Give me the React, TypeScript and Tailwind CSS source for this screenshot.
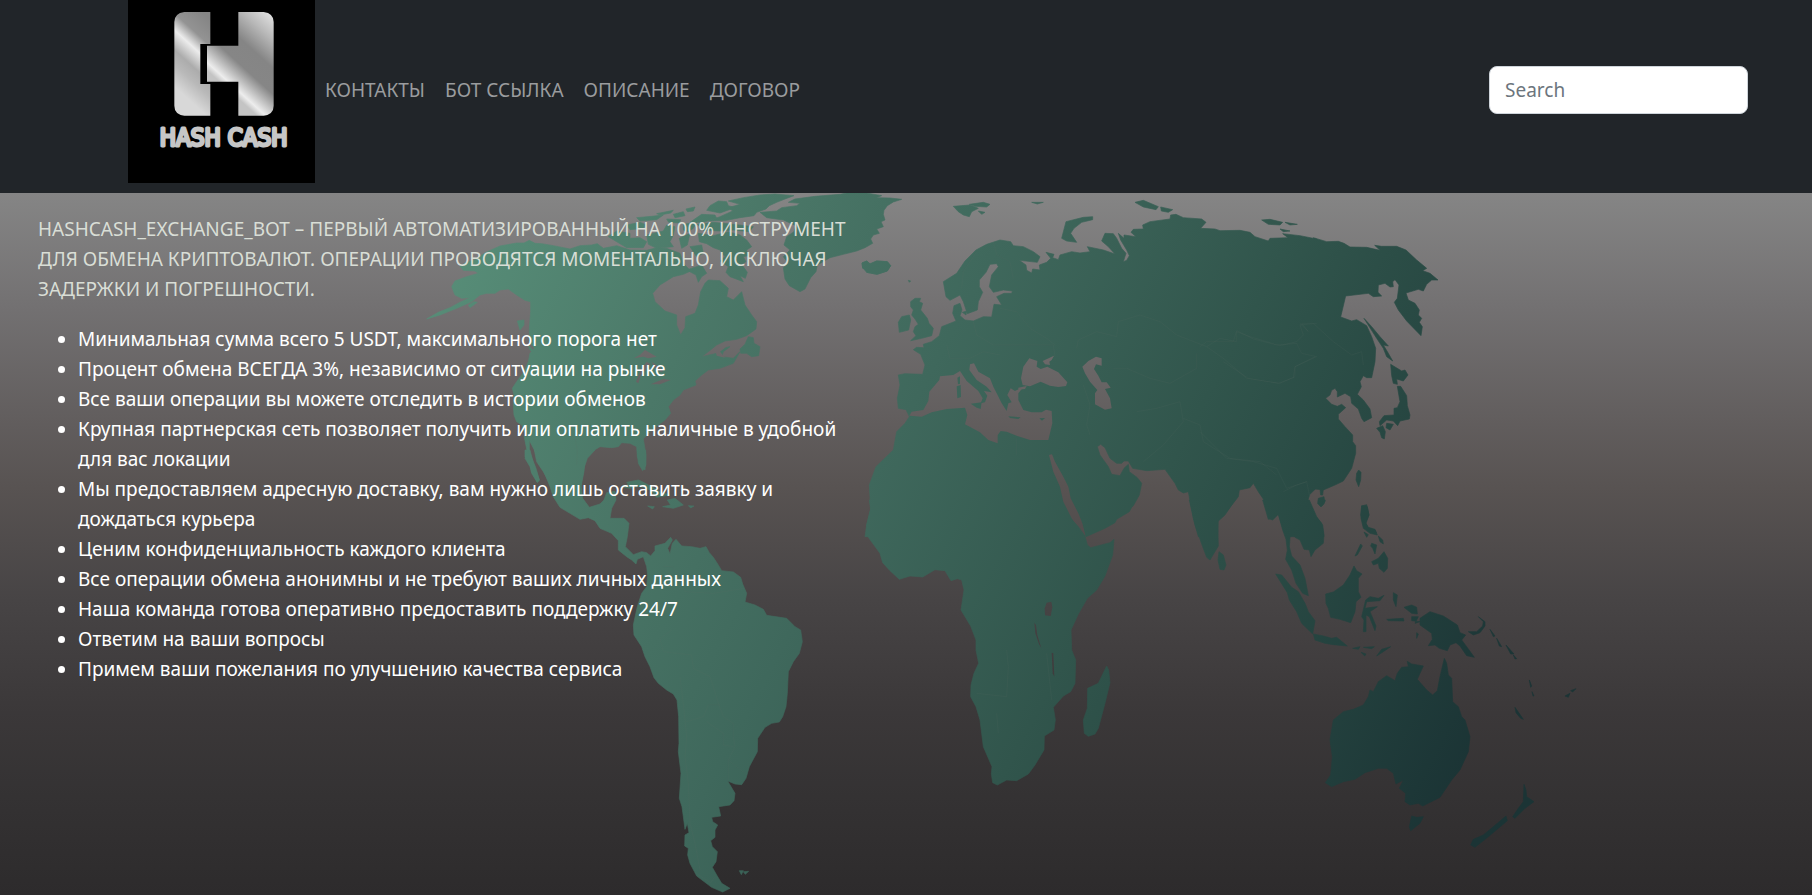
const navLinks = ["КОНТАКТЫ", "БОТ ССЫЛКА", "ОПИСАНИЕ", "ДОГОВОР"];

const features = [
  "Минимальная сумма всего 5 USDT, максимального порога нет",
  "Процент обмена ВСЕГДА 3%, независимо от ситуации на рынке",
  "Все ваши операции вы можете отследить в истории обменов",
  "Крупная партнерская сеть позволяет получить или оплатить наличные в удобной для вас локации",
  "Мы предоставляем адресную доставку, вам нужно лишь оставить заявку и дождаться курьера",
  "Ценим конфиденциальность каждого клиента",
  "Все операции обмена анонимны и не требуют ваших личных данных",
  "Наша команда готова оперативно предоставить поддержку 24/7",
  "Ответим на ваши вопросы",
  "Примем ваши пожелания по улучшению качества сервиса",
];

type Region = { at: [number, number]; land: string[]; water?: string[]; borders?: string[] };

const regions: Region[] = [
  {
    // North America, Greenland, Iceland
    at: [400, 185],
    land: [
      "80,402 115,382 150,368 180,352 210,338 185,340 165,330 155,305 165,288 200,275 235,265 225,258 190,256 180,244 200,232 232,222 245,210 262,200 300,183 350,174 372,174 388,166 405,175 425,176 460,182 510,192 540,182 575,180 592,176 610,190 650,182 690,195 740,196 770,188 800,190 840,205 850,235 872,258 850,268 820,275 780,300 758,325 765,350 795,378 830,390 830,420 842,450 855,428 857,395 885,385 895,360 902,320 915,295 925,285 960,287 985,310 980,335 1000,345 1025,320 1035,360 1055,390 1070,410 1068,432 1040,452 1010,463 975,468 950,480 925,500 905,515 950,505 975,488 990,485 970,500 965,515 1000,520 1020,500 1000,535 960,550 925,555 905,570 885,588 888,600 850,615 840,630 820,645 805,665 812,685 795,705 775,720 750,740 730,762 738,810 735,855 722,845 712,815 710,785 690,775 665,773 655,785 635,788 600,785 575,800 555,825 552,860 543,905 455,905 430,860 410,830 403,795 390,770 375,745 365,720 350,710 342,690 340,660 342,630 337,610 350,590 372,560 385,530 390,505 403,490 388,470 388,430 392,380 392,350 375,346 350,330 325,312 300,315 285,325 260,325 240,330 215,350 170,370 120,390",
      "372,752 388,760 388,800 398,825 408,850 418,885 412,893 395,865 390,845 375,820 382,802",
      "1020,492 1035,478 1045,455 1060,458 1062,475 1080,485 1076,512 1055,515 1040,505 1022,505",
      "352,408 372,405 372,420 360,435",
      "385,480 412,510 405,512 388,492",
      "205,360 222,350 232,352 210,368",
      "985,48 1030,38 1080,30 1125,27 1182,32 1155,42 1130,52 1108,62 1098,72 1070,82 1062,92 1020,98 980,106 925,108 960,95 998,78 985,68 1020,58",
      "930,62 955,48 980,50 985,62 1005,68 960,84 920,76",
      "905,88 945,90 950,100 910,112 870,112",
      "858,72 885,66 880,78 862,80",
      "770,86 820,76 812,84 780,90",
      "820,88 850,80 855,92 825,98",
      "710,98 755,94 790,90 770,104 720,108",
      "800,102 842,104 838,114 806,112",
      "680,120 720,112 740,120 730,130 690,134",
      "625,155 650,138 690,145 690,160 720,158 740,170 730,188 680,188 650,170",
      "740,150 790,138 800,120 825,125 820,150 810,170 820,185 770,190 745,178",
      "850,118 890,112 880,130 865,140 850,135",
      "838,160 870,145 862,180 845,190",
      "870,185 905,180 910,205 890,215",
      "860,255 905,240 920,265 905,275 895,292 888,270",
      "892,118 940,112 1000,118 1060,125 1048,140 1000,135 960,138 910,136",
      "895,145 940,152 985,140 1020,150 1040,165 1055,185 1040,195 1045,212 1030,215 1038,230 1025,238 1042,262 1036,280 1020,272 1030,290 990,275 978,262 985,245 960,228 975,215 960,195 940,188 920,176 898,170",
      "1080,82 1130,78 1145,68 1190,62 1200,55 1165,52 1185,42 1245,34 1320,28 1350,22 1400,24 1445,32 1428,38 1470,39 1505,43 1480,51 1462,62 1452,76 1450,88 1455,105 1443,110 1450,125 1430,132 1438,145 1420,150 1412,162 1418,175 1395,188 1370,198 1330,208 1290,218 1252,240 1248,260 1232,278 1215,312 1200,320 1168,302 1155,282 1150,248 1165,235 1150,215 1170,195 1152,180 1160,155 1182,140 1188,122 1150,105 1100,98",
      "1386,234 1400,228 1410,238 1430,228 1462,230 1472,242 1462,258 1432,268 1400,262 1388,248",
      "680,892 715,885 740,898 735,906 690,902",
    ],
    water: [
      "702,520 722,508 735,495 770,515 745,520 730,515",
      "740,530 752,538 722,572 715,595 708,590 722,555",
      "755,530 790,555 785,562 765,550",
      "752,598 790,582 812,585 780,598",
      "945,490 985,470 985,480 960,500 975,518 950,512",
      "930,270 950,272 940,284",
    ],
    borders: ["525,760 532,795 530,840"],
  },
  {
    // Central and South America
    at: [500, 450],
    land: [
      "103,0 285,0 262,25 250,60 243,105 248,145 268,172 300,162 312,150 320,128 345,124 348,150 335,175 330,205 372,205 387,220 382,260 376,290 400,314 425,305 440,308 452,318 465,302 465,288 495,280 512,262 517,270 503,295 510,312 517,280 528,268 545,288 575,290 600,295 618,290 628,308 640,322 655,345 665,362 700,366 722,382 728,402 740,430 735,456 765,465 790,478 800,496 860,505 885,530 902,540 907,575 898,610 880,635 865,665 862,730 858,770 848,800 838,816 815,820 795,832 773,865 772,905 748,950 738,985 725,1004 705,1002 683,993 705,1030 702,1052 690,1065 656,1070 662,1098 635,1102 638,1115 653,1125 645,1140 645,1162 632,1172 637,1190 652,1205 648,1235 637,1252 650,1275 665,1300 690,1315 668,1326 635,1312 590,1278 570,1240 563,1215 565,1195 554,1188 555,1155 567,1148 562,1120 555,1138 550,1100 546,1070 538,1045 543,970 535,905 537,880 536,800 531,750 520,732 500,720 475,700 462,683 450,650 435,620 425,590 402,555 400,525 412,470 425,430 440,410 443,375 440,350 430,320 412,328 408,342 395,330 380,320 355,300 355,272 335,250 300,235 285,212 265,203 240,208 210,190 180,172 160,140 150,110 130,60 125,40",
      "75,0 90,0 100,40 118,90 112,96 95,65 92,45 75,20",
      "412,0 437,0 438,45 428,62 415,40",
      "372,112 390,98 420,92 455,110 480,125 510,135 470,142 450,120 420,108 390,115",
      "502,150 525,145 550,165 520,175 488,170 512,165",
      "443,168 463,170 458,177",
      "565,167 582,168 572,174",
      "718,1262 730,1262 724,1274",
      "730,1265 746,1264 736,1273",
    ],
    borders: [
      "490,350 520,350 555,425 640,430 735,415",
      "515,540 480,565 490,605 575,615 580,655 630,680 640,710 655,760 670,800 700,820 700,860 705,890 685,930 685,990",
      "540,680 552,780 560,860 555,920 565,1000 570,1120 585,1180 600,1260",
      "560,815 610,800 625,765 660,765",
      "620,815 670,850 670,885 700,890",
      "685,930 735,970",
      "585,1268 632,1298 645,1280",
    ],
  },
  {
    // Europe, North Africa, western and central Asia
    at: [850, 185],
    land: [
      "145,670 142,640 150,600 145,570 165,566 218,568 225,540 212,508 190,494 200,487 222,488 220,478 245,470 268,452 275,425 318,408 308,385 312,362 330,355 336,375 330,392 345,405 370,408 400,395 425,396 432,358 455,360 440,335 462,325 485,325 487,318 460,315 430,322 418,305 425,270 445,245 440,236 420,238 408,262 388,285 388,305 398,322 385,350 382,375 352,386 340,350 330,330 300,346 288,335 280,290 320,265 345,228 378,195 410,178 450,165 482,170 490,182 520,185 550,200 570,215 562,232 508,226 528,240 530,256 545,264 548,252 570,255 568,240 590,232 602,220 588,202 612,208 608,218 625,224 630,210 665,200 690,204 720,200 712,185 760,195 795,207 775,185 755,168 765,145 790,146 800,160 815,190 828,205 820,230 830,226 838,212 830,195 812,165 805,145 822,160 822,150 858,155 843,142 850,133 880,132 878,120 900,110 960,102 962,90 978,88 1000,98 1055,102 1068,112 1052,130 1095,132 1110,137 1170,136 1200,142 1215,155 1255,168 1260,160 1314,158 1298,146 1350,152 1400,162 1400,908 1380,928 1372,950 1390,985 1415,1015 1422,1055 1310,1055 1300,1035 1285,988 1268,1005 1255,1000 1252,960 1225,920 1210,895 1200,908 1168,915 1165,935 1130,980 1105,1000 1103,1055 1045,1055 1030,1000 1015,920 1000,924 985,915 975,895 945,853 890,857 848,850 835,828 822,828 815,835 800,835 780,820 765,788 752,778 742,785 750,810 775,845 785,868 810,872 822,850 835,838 838,860 862,878 875,895 868,930 850,962 800,1000 760,1025 705,1052 45,1055 50,1020 62,970 58,900 78,845 130,795 140,740 165,715 178,695 168,674",
      "182,350 195,340 212,340 208,350 218,355 212,375 232,400 237,415 250,430 245,452 215,460 182,467 198,452 190,440 195,425 205,418 195,402 185,390 190,375 182,365",
      "145,412 155,395 178,390 182,405 176,435 148,442",
      "337,382 350,378 348,390",
      "310,64 360,60 385,70 365,80 358,95 340,90 325,80",
      "358,58 400,52 420,58 410,66 375,64",
      "385,78 405,82 395,88",
      "545,52 580,52 562,57",
      "36,234 50,228 60,236 80,228 112,230 122,242 112,258 80,268 50,262 60,250 38,250",
      "635,160 648,110 700,97 728,95 728,104 695,112 672,130 662,145 680,172 650,168",
      "855,52 880,46 925,65 918,74 880,66",
      "932,66 968,74 955,82 934,78",
      "1235,105 1260,103 1298,112 1290,120 1255,118",
      "1305,112 1342,118 1320,120",
      "1290,132 1320,138 1300,140",
      "1405,940 1422,935 1424,950 1412,965 1403,955",
      "1410,912 1420,912 1418,930 1412,930",
      "175,286 182,288 178,292",
    ],
    water: [
      "178,692 185,680 220,675 235,648 238,620 268,585 270,574 310,570 330,558 350,588 385,618 398,640 392,655 405,652 412,632 402,618 425,622 410,605 380,585 358,555 360,538 372,535 385,560 420,580 430,605 440,625 455,655 470,678 475,655 485,652 472,630 482,610 495,618 520,606 505,625 505,645 520,675 545,682 575,682 588,674 605,678 607,715 595,765 560,765 540,765 500,752 470,740 452,738 443,750 443,775 415,765 390,742 345,718 352,690 345,668 290,672 245,682 215,695 190,693",
      "513,580 520,545 538,520 562,528 560,545 572,552 592,545 625,562 652,592 648,603 625,606 600,602 572,590 540,604 518,600",
      "578,528 612,512 605,525 598,530 600,540 585,538",
      "697,545 715,528 738,515 755,520 755,542 738,538 732,552 745,572 755,592 770,592 782,608 765,612 780,640 785,670 765,674 735,658 735,625 742,615 720,590 705,565",
      "597,810 606,808 615,830 640,875 655,905 662,940 685,985 697,1015 708,1052 698,1052 665,1000 640,950 630,905 610,860",
      "505,608 530,603 525,612 505,614",
    ],
    borders: [
      "370,410 380,450 430,480 520,480 610,480 615,515",
      "450,370 500,380 540,430 590,460 615,480",
      "430,170 440,210 480,230 490,280",
      "380,200 340,260 335,310",
      "680,490 685,465 740,440 800,455 805,410 870,390 930,410 980,450 1070,485 1110,460 1160,470 1160,440 1200,455 1250,470 1290,482 1340,470 1360,450 1350,420 1400,415",
      "1070,485 1120,520 1190,580 1290,595 1335,575 1335,545 1395,515",
      "790,550 830,550 900,580 960,595 1040,550 1040,505",
      "700,600 720,660 710,720 720,750",
      "860,680 920,670 990,650 1000,710 940,780 880,830",
      "1000,700 1050,720 1060,770 1140,820 1230,830 1280,870",
      "1300,920 1340,900 1370,890 1380,940",
      "290,480 300,520 360,520 400,500 450,510",
      "500,760 500,810",
    ],
  },
  {
    // Africa, southern Arabia, southern India
    at: [850, 500],
    land: [
      "58,0 635,0 645,30 662,55 685,80 705,108 712,135 722,143 780,128 792,118 788,165 765,228 740,270 712,295 685,342 663,390 665,450 677,480 675,550 662,575 640,588 610,622 616,660 612,690 583,708 582,750 555,795 535,822 500,842 470,840 442,855 428,848 424,822 426,800 400,740 390,660 378,620 362,590 363,555 372,520 386,490 378,450 378,420 362,378 333,330 342,270 335,240 322,236 303,242 285,212 255,209 218,231 180,228 148,238 120,212 98,188 90,160 55,112 50,75 62,30",
      "675,0 857,0 838,35 800,58 795,68 765,85 708,110 698,60",
      "1018,0 1155,0 1125,45 1103,65 1105,138 1080,180 1070,172 1058,140 1035,75",
      "1107,155 1120,165 1128,195 1122,210 1110,208 1104,180",
      "770,498 776,510 780,548 765,610 745,685 735,702 715,709 703,700 700,660 712,625 713,565 745,550",
    ],
    water: [
      "590,308 604,305 607,322 602,348 585,346 584,325",
      "553,368 558,375 562,405 574,445 567,432 556,400",
      "605,458 610,460 613,530 608,520",
    ],
    borders: ["470,450 475,500 470,590 380,580", "440,640 445,700", "590,460 605,600"],
  },
  {
    // East Asia, Kamchatka, Japan
    at: [1200, 185],
    land: [
      "340,158 380,170 415,169 432,175 450,186 500,187 540,196 524,181 545,184 590,184 618,195 650,225 680,250 668,257 690,265 714,285 695,285 680,298 670,318 655,313 618,324 625,345 645,355 658,375 655,390 665,400 658,412 667,425 663,452 620,408 595,375 583,352 592,340 597,300 585,284 578,290 580,305 570,306 555,295 535,300 534,322 545,333 520,335 505,325 437,333 422,396 455,408 470,404 500,422 515,455 527,490 525,530 515,578 500,578 490,572 480,590 484,605 472,628 490,645 510,672 515,698 492,710 485,700 475,672 455,655 452,635 435,625 412,636 412,620 405,610 395,616 390,630 377,640 395,658 412,664 425,658 437,668 415,688 415,702 435,725 458,750 458,770 467,782 467,805 455,850 430,888 405,900 370,915 345,912 340,916",
      "492,400 515,425 540,455 565,483 550,480 565,505 578,528 560,515 550,490 530,460",
      "572,538 605,558 615,555 624,570 610,588 590,582 592,598 580,595 575,572",
      "592,604 602,604 620,632 622,662 630,690 628,702 600,708 593,722 580,708 560,705 540,722 538,710 552,692 582,690 582,670 592,668 600,650",
      "530,730 548,722 556,740 553,762 545,758 540,742",
      "560,715 580,718 570,735 558,728",
      "476,855 483,862 482,885 476,905 468,885 470,865",
      "485,962 502,965 507,990 498,1015 505,1030 525,1035 532,1050 510,1045 490,1030 483,1000",
    ],
    borders: [
      "300,415 325,440 305,415 340,415 400,470 455,510 485,500 490,540",
      "0,485 20,470 100,470 110,437 160,462 230,480 290,475 305,505 350,515 285,545 280,578 235,595 145,580 70,530",
      "0,740 80,820 160,830 230,850 260,910 320,890",
    ],
  },
  {
    // Southeast Asia, Australia, New Zealand
    at: [1200, 500],
    land: [
      "188,0 328,0 350,50 368,75 372,105 370,130 345,150 333,170 328,150 312,148 300,120 285,112 280,98 272,98 270,115 268,140 275,168 300,195 315,235 325,287 308,280 288,250 275,210 257,178 262,150 258,118 248,90 235,42 220,55 205,58",
      "355,0 376,0 372,12 364,20 356,12",
      "227,222 245,225 275,262 295,275 315,310 325,335 345,362 338,402 305,370 290,335 268,300 262,278",
      "340,402 370,408 395,415 410,412 442,438 400,434 375,430 345,420",
      "377,282 400,276 430,255 450,225 462,198 470,212 486,222 475,235 475,275 483,292 468,305 465,335 452,368 420,358 392,352 385,325 378,310",
      "497,300 510,290 535,295 552,286 540,302 500,305 495,325 515,322 532,320 510,335 528,378 525,392 508,350 498,345 498,395 490,395 492,360 485,350",
      "485,18 500,14 507,45 497,68 505,82 525,88 530,100 510,95 492,82 482,45",
      "515,185 535,175 552,155 563,175 562,205 552,217 538,205 535,190 520,195",
      "535,108 548,120 550,132 540,125",
      "515,130 530,135 525,162 518,145 512,138",
      "465,168 482,132 487,138 472,165",
      "492,96 505,104 500,112",
      "580,278 592,285 588,320 580,300",
      "560,358 610,355 612,363 565,362",
      "612,322 635,315 650,322 652,342 635,340",
      "635,350 655,350 645,370 660,365 635,362",
      "660,355 690,335 730,348 772,375 780,398 797,405 785,420 800,440 823,472 800,467 780,438 768,428 750,435 742,452 718,445 705,435 685,437 697,418 695,400 660,375",
      "805,395 830,395 848,378 850,365 835,350 855,365 855,378 840,398 820,405",
      "870,388 885,408 880,410",
      "890,415 905,440 898,438",
      "918,435 942,462 932,462",
      "940,465 950,476 945,477",
      "458,445 480,440 475,448",
      "490,442 523,440 515,446",
      "483,457 498,462 494,468",
      "530,468 545,448 572,440 550,455",
      "650,398 655,402 650,415",
      "622,484 635,492 670,498 660,520 652,538 680,570 698,585 712,572 720,530 733,475 740,490 745,525 755,535 758,605 775,620 785,650 795,660 810,710 805,755 780,810 755,840 720,892 700,902 668,918 655,910 630,915 615,905 617,880 598,865 610,840 588,852 580,820 560,805 535,805 495,818 465,838 430,845 395,860 376,848 392,825 397,770 390,720 400,660 430,635 460,628 490,615 505,590 510,570 520,575 535,545 560,527 585,542 592,520 605,502 625,500",
      "635,948 650,952 670,950 660,970 632,992 628,980",
      "972,853 978,870 980,890 1002,905 975,925 945,955 938,950 955,925 970,905",
      "918,948 922,962 865,1010 825,1042 812,1035 820,1018 850,1005 880,980",
      "945,622 970,658 962,655 948,638",
      "988,540 995,558 992,562",
      "996,575 1002,588 999,588",
      "1095,588 1110,580 1105,592",
      "1112,572 1128,566 1118,576",
    ],
  },
];

function place([x, y]: [number, number]) {
  return `translate(${x} ${y}) scale(0.33333)`;
}

function WorldMap() {
  return (
    <svg
      className="absolute inset-0 h-full w-full"
      viewBox="0 193 1812 702"
      preserveAspectRatio="xMidYMin slice"
      aria-hidden="true"
    >
      <defs>
        <linearGradient id="land" gradientUnits="userSpaceOnUse" x1="430" y1="250" x2="1450" y2="800">
          <stop offset="0" stopColor="#588f79" />
          <stop offset="0.23" stopColor="#4b7868" />
          <stop offset="0.43" stopColor="#3f685c" />
          <stop offset="0.65" stopColor="#31554c" />
          <stop offset="0.77" stopColor="#294a44" />
          <stop offset="1" stopColor="#1b3435" />
        </linearGradient>
        <mask id="continents" maskUnits="userSpaceOnUse" x="0" y="193" width="1812" height="702">
          {regions.map((r, i) => (
            <g key={i} transform={place(r.at)}>
              {r.land.map((p) => (
                <polygon key={p} points={p} fill="#fff" stroke="#fff" strokeWidth="2" strokeLinejoin="round" />
              ))}
              {r.water?.map((p) => (
                <polygon key={p} points={p} fill="#000" />
              ))}
            </g>
          ))}
          <g transform={place([850, 185])} fill="#fff">
            <polygon points="362,656 395,652 392,672 380,668" />
            <polygon points="320,604 332,600 333,636 322,640" />
            <polygon points="322,578 330,574 330,596 324,598" />
            <polygon points="475,694 512,697 505,702 480,699" />
            <polygon points="568,700 585,699 576,707" />
          </g>
        </mask>
      </defs>
      <rect x="0" y="193" width="1812" height="702" fill="url(#land)" mask="url(#continents)" />
      {regions.map((r, i) => (
        <g key={i} transform={place(r.at)} fill="none" stroke="#5b6f66" strokeOpacity="0.2" strokeWidth="2">
          {r.borders?.map((p) => (
            <polyline key={p} points={p} />
          ))}
        </g>
      ))}
    </svg>
  );
}

function Logo() {
  return (
    <svg className="block h-[183px] w-[187px]" viewBox="24 0 561 549" role="img" aria-label="Hash Cash">
      <defs>
        <linearGradient id="steelLeft" gradientUnits="userSpaceOnUse" x1="271" y1="60" x2="123" y2="223">
          <stop offset="0" stopColor="#858585" />
          <stop offset="0.26" stopColor="#939393" />
          <stop offset="0.43" stopColor="#ececec" />
          <stop offset="0.63" stopColor="#acacac" />
          <stop offset="0.78" stopColor="#b9b9b9" />
          <stop offset="1" stopColor="#d8d8d8" />
        </linearGradient>
        <linearGradient id="steelRight" gradientUnits="userSpaceOnUse" x1="450" y1="45" x2="282" y2="230">
          <stop offset="0" stopColor="#dcdcdc" />
          <stop offset="0.2" stopColor="#b8b8b8" />
          <stop offset="0.45" stopColor="#858585" />
          <stop offset="0.68" stopColor="#868686" />
          <stop offset="0.93" stopColor="#ededed" />
          <stop offset="1" stopColor="#c4c4c4" />
        </linearGradient>
      </defs>
      <rect x="24" y="0" width="561" height="549" fill="#000" />
      <path
        d="M193 36H271V132H241V252H271V347H193Q163 343 163 317V66Q163 40 193 36Z"
        fill="url(#steelLeft)"
      />
      <path
        d="M355 36H431Q461 40 461 66V317Q461 343 431 347H355V245H261V137H355Z"
        fill="url(#steelRight)"
      />
      <text
        x="311"
        y="438"
        textAnchor="middle"
        fontSize="72"
        fontFamily="'DejaVu Sans Condensed', 'DejaVu Sans', sans-serif"
        fill="#c6c6c6"
        stroke="#c6c6c6"
        strokeWidth="9"
        strokeLinejoin="round"
      >
        HASH CASH
      </text>
    </svg>
  );
}

export default function App() {
  return (
    <div className="flex min-h-screen flex-col bg-[#2e2c2d] font-['Noto_Sans','Open_Sans',sans-serif] text-[19px] leading-[30px]">
      <header className="flex items-start bg-[#212529] pr-16 pb-2.5 pl-32">
        <div className="flex flex-1 items-center">
          <a href="#home">
            <Logo />
          </a>
          <nav className="flex pb-1">
            {navLinks.map((label) => (
              <a key={label} href="#" className="px-2.5 text-[#9a9c9e] hover:text-white">
                {label}
              </a>
            ))}
          </nav>
          <form className="ml-auto pb-1" role="search">
            <input
              type="search"
              aria-label="Search"
              placeholder="Search"
              className="block h-12 w-[259px] rounded-lg border border-[#ced4da] bg-white px-[15px] text-[#212529] placeholder:text-[#6c757d]"
            />
          </form>
        </div>
      </header>

      <main className="relative flex-1 bg-[linear-gradient(to_bottom,#858585_0%,#737172_16%,#625e5e_32%,#585352_42%,#474445_58%,#3b3839_74%,#343233_86%,#2d2b2c_100%)]">
        <WorldMap />
        <section className="relative w-1/2 pt-[21px] pr-10 pl-[38px]">
          <p className="mb-5 text-[#d9ded6]">
            HASHCASH_EXCHANGE_BOT – ПЕРВЫЙ АВТОМАТИЗИРОВАННЫЙ НА 100% ИНСТРУМЕНТ ДЛЯ ОБМЕНА КРИПТОВАЛЮТ. ОПЕРАЦИИ
            ПРОВОДЯТСЯ МОМЕНТАЛЬНО, ИСКЛЮЧАЯ ЗАДЕРЖКИ И ПОГРЕШНОСТИ.
          </p>
          <ul className="list-disc pl-10 text-white">
            {features.map((item) => (
              <li key={item}>{item}</li>
            ))}
          </ul>
        </section>
      </main>
    </div>
  );
}
